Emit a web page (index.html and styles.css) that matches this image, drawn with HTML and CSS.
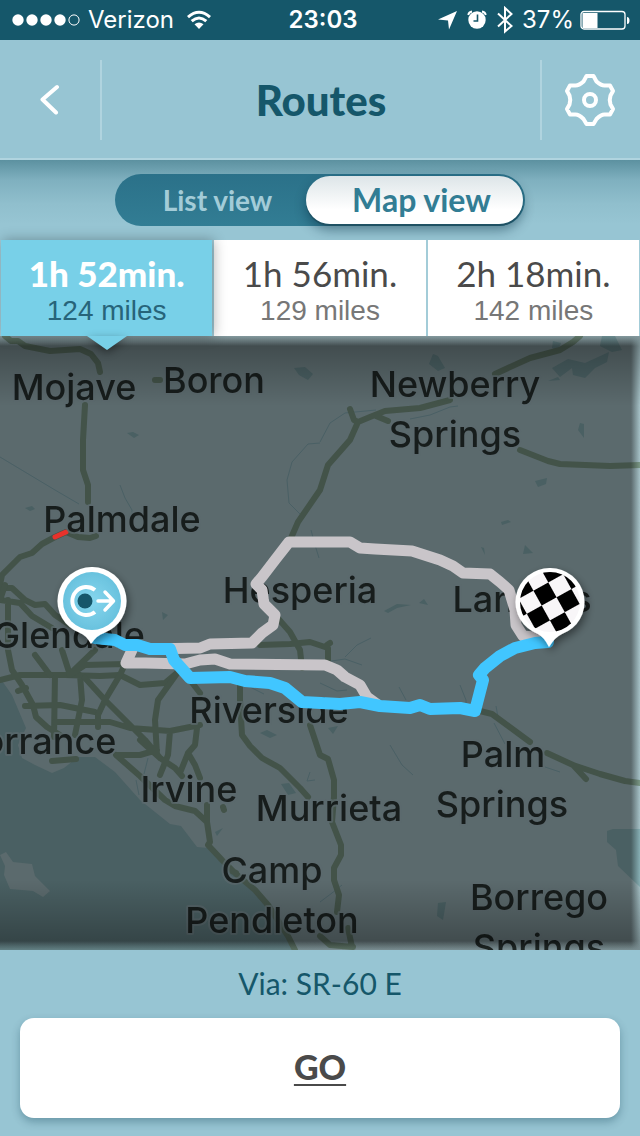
FILE: index.html
```html
<!DOCTYPE html>
<html lang="en">
<head>
<meta charset="utf-8">
<meta name="viewport" content="width=device-width, initial-scale=1">
<title>Routes</title>
<link rel="stylesheet" href="styles.css">
</head>
<body>
<div class="status">
  <div class="status-side">
    <svg class="signal" width="68" height="12" viewBox="0 0 68 12" aria-hidden="true"><g fill="#fff"><circle cx="6" cy="6" r="5.7"/><circle cx="20" cy="6" r="5.7"/><circle cx="34" cy="6" r="5.7"/><circle cx="48" cy="6" r="5.7"/></g><circle cx="62" cy="6" r="5.1" fill="none" stroke="#fff" stroke-width="1"/></svg>
    <span>Verizon</span>
    <svg class="wifi" width="26" height="20" viewBox="0 0 26 20" aria-hidden="true"><g fill="none" stroke="#fff" stroke-width="3"><path d="M2 7.2Q13-2.600 24 7.200"/><path d="M5.700 11.200Q13 4.800 20.300 11.200"/></g><path d="M8.500 14.200Q13 10.700 17.500 14.200L13 19Z" fill="#fff"/></svg>
  </div>
  <span class="clock">23:03</span>
  <div class="status-side status-end">
    <svg width="20" height="20" viewBox="0 0 20 20" aria-hidden="true"><path d="M19 1L11 19.500 10 10.500 0 9.500Z" fill="#fff"/></svg>
    <svg width="22" height="20" viewBox="0 0 22 20" aria-hidden="true"><circle cx="11" cy="10" r="8.700" fill="#fff"/><path d="M2.200 5Q2.800 2 6 1.500M19.800 5Q19.200 2 16 1.500" fill="none" stroke="#fff" stroke-width="1.800"/><path d="M11.500 4.500V11H7.500" fill="none" stroke="#15576a" stroke-width="1.600"/></svg>
    <svg width="18" height="28" viewBox="0 0 18 28" aria-hidden="true"><path d="M2 7.500L15.500 20 9 25.500V2L15.500 8 2 20.500" fill="none" stroke="#fff" stroke-width="2"/></svg>
    <span class="battery">37%
    <svg width="50" height="20" viewBox="0 0 50 20" aria-hidden="true"><rect x="1" y="1.500" width="44" height="17.500" rx="3" fill="none" stroke="#fff" stroke-width="1.300"/><path d="M2.500 3H17.500V18H2.500ZM47 7Q49.500 7 49.500 10.500T47 14Z" fill="#fff"/></svg></span>
  </div>
</div>

<header class="header">
  <button class="nav-btn nav-back" aria-label="Back">
    <svg width="20" height="32" viewBox="0 0 20 32" aria-hidden="true"><path d="M17 3L2.500 15.500 16 28.500" fill="none" stroke="#fff" stroke-width="4" stroke-linecap="round" stroke-linejoin="round"/></svg>
  </button>
  <h1 class="title">Routes</h1>
  <button class="nav-btn nav-settings" aria-label="Settings">
    <svg width="52" height="54" viewBox="0 0 52 54" aria-hidden="true"><g fill="none" stroke="#fff" stroke-width="4" stroke-linejoin="round"><path d="M22.500 3H29.500L32.500 8.500Q37 12.500 40.500 12.500H46L49 18 46.500 22.500Q45 27 46.500 31.500L49 36 46 41.500H40.500Q37 41.500 32.500 46L29.500 51H22.500L19.500 46Q15 41.500 11.500 41.500H6L3 36 5.500 31.500Q7 27 5.500 22.500L3 18 6 12.500H11.500Q15 12.500 19.500 8.500Z"/><circle cx="26" cy="27" r="6"/></g></svg>
  </button>
</header>

<main class="content">
  <div class="switch-bar">
    <div class="switch">
      <button class="switch-item">List view</button>
      <button class="switch-item switch-on" aria-pressed="true">Map view</button>
    </div>
  </div>

  <div class="options">
    <button class="option option-on" aria-pressed="true"><span class="time">1h 52min.</span><span class="distance">124 miles</span></button>
    <button class="option"><span class="time">1h 56min.</span><span class="distance">129 miles</span></button>
    <button class="option"><span class="time">2h 18min.</span><span class="distance">142 miles</span></button>
  </div>

  <section class="map" aria-label="Route map">
    <svg class="map-art" viewBox="0 336 640 614" preserveAspectRatio="xMidYMid slice">
      <defs>
        <radialGradient id="startFill"><stop offset="0" stop-color="#86d6ee"/><stop offset="1" stop-color="#69c2de"/></radialGradient>
        <pattern id="checks" width="34" height="34" patternUnits="userSpaceOnUse" patternTransform="translate(545 594) rotate(-29) translate(-8.500 -8.500)"><rect width="34" height="34" fill="#f8f6f8"/><path d="M0 0H17V34H34V17H0Z"/></pattern>
        <filter id="pinShadow" x="-50%" y="-50%" width="200%" height="200%"><feDropShadow dx="2" dy="4" stdDeviation="4" flood-color="#000" flood-opacity=".45"/></filter>
      </defs>
      <rect x="0" y="336" width="640" height="614" fill="#5b6a6d"/>

      <g class="water">
        <path d="M0 678L12 695 26 728 18 745 22 758 35 765 52 773 64 768 78 757 95 757 115 772 140 800 170 824 181 826 197 847 208 848 225 865 250 888 268 904 282 925 296 950H0Z"/>
        <path d="M607 831L613 829H640V887L618 866 616 850 607 842Z"/>
        <path d="M602 336H615L622 350 612 352 600 346ZM552 368L568 359 585 363 609 352 607 362 595 368 585 378 573 375 572 368 560 377ZM548 381L558 377 560 380ZM553 341L561 343 558 351 552 348ZM433 354L438 356 445 368 438 371 429 364ZM294 368L305 367 313 374 308 380 299 375ZM127 433L133 432 139 435 134 438ZM580 423L584 424V438L578 430ZM535 481L547 478 546 484 538 487ZM25 508L32 506 35 509 30 511ZM501 522L508 520 511 522 502 525ZM525 545L533 553 523 554ZM481 547L485 555 484 548ZM384 611L397 604 411 605 397 608 388 613ZM419 603L424 599 428 605ZM162 612L168 615 163 620ZM260 733L267 730 277 735 270 738ZM328 728L338 726 333 734ZM281 784L289 783 296 793 288 795ZM215 832L223 828 217 836ZM438 903L446 902 443 920 437 916Z"/>
      </g>
      <path d="M0 855L6 852 13 862 32 864 35 876 50 891 43 897 33 891 10 889 4 875 5 866Z" fill="#5b6a6d"/>

      <g class="streams">
        <path d="M0 457L30 475 55 490 79 504M120 485L125 498 132 510V518M320 443L308 444 292 462 287 480 289 503 301 515M311 530L315 545 319 558M320 442L330 423 345 413 376 410M410 419L430 415 450 407 458 406M320 683L337 691 347 690M399 687L406 700M460 685L466 700V708M496 706L498 717M494 723L505 744M390 745L402 765 413 775M545 767L560 772M148 758L144 774M310 772L307 781 315 780M320 902L332 893 342 885M325 662L345 659 362 665M345 657L357 645 371 638M244 684L264 694M136 780L139 795"/>
      </g>

      <g class="roads">
        <path d="M5 336L11 341 18 341 25 346 50 351 80 349 91 354 98 363 100 372M85 405L83 440 83 470 88 485V502M96 536L90 538 78 537 66 532 55 537 42 544 32 553 20 557 2 575 0 585M155 380H160"/>
        <path d="M350 409L354 420 358 422 350 440 328 465 320 490 298 522 288 545M358 422L370 417 385 411 420 408 450 400M376 416L388 421M495 374L530 358 560 350 573 342 580 336M520 450L548 461 560 464 610 466 640 465"/>
        <path d="M480 711L492 714 530 742M547 753L573 765 600 774 625 781 640 783M573 765L586 779M275 615L290 632 300 650 302 668M260 645L290 644 310 642 328 648V660M327 645L330 643"/>
        <path d="M240 680V700L242 735 250 746 262 758 280 768 300 788 308 797M310 725L320 755 328 759 334 780V797L332 822 341 845V855L334 868V880L339 895 337 912M348 928L352 947M320 936L330 945 353 947"/>
        <path d="M116 755L140 776 165 800 175 806 195 811 207 822 210 842 208 845 222 860 235 873 255 890 268 905 288 936 295 950M207 805V822M223 807L224 810M232 871L236 873"/>
        <path d="M0 588H12L25 600 35 605 45 604 55 615 70 625M0 600L20 603 32 616 52 628M8 600V650L12 670 22 685 33 705 36 717 47 727 60 735M0 680L20 675 65 675 100 676 120 675 140 685 165 683 178 672M18 691L26 688M25 706L60 705 95 712M55 675L54 737M80 675L82 700 75 735"/>
        <path d="M55 722L110 722 130 728 170 731 200 725M85 678L105 700 125 720 145 740 160 758M62 650L70 675 85 665 125 664 120 675 105 700 98 715V727M178 672L158 700 155 720 157 755M170 731L168 755 160 775M197 728L195 745 188 753 180 773M188 753L195 765 200 778M117 755L140 755 157 750M140 740L160 758 175 768 182 776M52 761L76 759M35 655L50 675M95 650L70 674M190 680L200 693M0 600L5 585"/>
      </g>
      <path d="M55 537L66 532" class="traffic"/>

      <g class="labels">
        <text x="74" y="400">Mojave</text>
        <text x="214" y="393">Boron</text>
        <text x="455" y="397">Newberry</text>
        <text x="455" y="447">Springs</text>
        <text x="122" y="532">Palmdale</text>
        <text x="300" y="603">Hesperia</text>
        <text x="522" y="612">Landers</text>
        <text x="69" y="648">Glendale</text>
        <text x="269" y="723">Riverside</text>
        <text x="39" y="754">Torrance</text>
        <text x="189" y="802">Irvine</text>
        <text x="329" y="821">Murrieta</text>
        <text x="503" y="767">Palm</text>
        <text x="502" y="817">Springs</text>
        <text x="272" y="883">Camp</text>
        <text x="272" y="933">Pendleton</text>
        <text x="539" y="910">Borrego</text>
        <text x="539" y="960">Springs</text>
      </g>

      <g class="route">
        <path d="M150 649L200 648 210 644 252 643 262 633 273 625 275 615 264 604 262 590 256 584 262 577 275 560 289 542H350L360 548 375 549 412 551 440 560 453 566 463 573 490 574 500 582 509 590 515 610 516 625 523 636 545 638"/>
        <path d="M132 650L126 663 145 663 185 664 200 660 215 659 230 664 325 665 337 670 345 677 360 685 367 697 378 705"/>
      </g>
      <path class="route route-on" d="M95 638L115 640 125 645 137 645 150 649 170 649 174 660 190 678 230 677 245 681 270 683 285 688 302 702 340 704 360 702 380 706 410 708 420 705 430 709 460 708 475 711 483 680 479 675 485 668 500 656 515 648 535 643 548 642"/>

      <g filter="url(#pinShadow)">
        <path d="M92 567A34 34 0 0 1 104 633Q97 635 91 644 86 635 80 633A34 34 0 0 1 92 567Z" fill="#fff"/>
        <circle cx="92" cy="601" r="29" fill="url(#startFill)"/>
        <path d="M95 590A14 14 0 1 0 95 612" fill="none" stroke="#fff" stroke-width="4"/>
        <circle cx="85" cy="601" r="7.500" fill="#15576a"/>
        <path d="M98 601H113M105 592L113.500 601 105 610" fill="none" stroke="#fff" stroke-width="3.500" stroke-linecap="round" stroke-linejoin="round"/>
      </g>
      <g filter="url(#pinShadow)">
        <path d="M550 568A34 34 0 0 1 562 634Q555 637 549 647 544 637 538 634A34 34 0 0 1 550 568Z" fill="#fff"/>
        <circle cx="550" cy="602" r="30" fill="url(#checks)"/>
      </g>
    </svg>
  </section>
</main>

<footer class="footer">
  <p class="via">Via: SR-60 E</p>
  <button class="go">GO</button>
</footer>
</body>
</html>
```
FILE: styles.css
```css
* { box-sizing: border-box; }

body {
  margin: 0;
  min-height: 100vh;
  display: flex;
  flex-direction: column;
  background: #97c5d3;
  color: #15576a;
  font-family: Lato, "Open Sans", sans-serif;
}

button {
  margin: 0;
  padding: 0;
  border: 0;
  background: none;
  color: inherit;
  font: inherit;
  cursor: pointer;
}

.status {
  display: grid;
  grid-template-columns: 1fr auto 1fr;
  align-items: center;
  height: 40px;
  padding: 0 10px 0 12px;
  background: #15576a;
  color: #fff;
  font: 24px/40px Inter, sans-serif;
}
.status-side { display: flex; align-items: center; gap: 8px; }
.status-side svg { flex: none; }
.status .wifi { margin-left: 4px; }
.status-end { justify-content: flex-end; }
.battery { display: flex; align-items: center; gap: 6px; }
.clock { padding-left: 4px; font-weight: 600; }

.header {
  display: grid;
  grid-template-columns: 102px 1fr 100px;
  align-items: center;
  height: 120px;
  padding-top: 2px;
  border-bottom: 2px solid #b0d4df;
}
.nav-btn {
  display: flex;
  align-items: center;
  justify-content: center;
  height: 80px;
}
.nav-back { border-right: 2px solid #b0d4df; }
.nav-settings { padding-right: 2px; border-left: 2px solid #b0d4df; }
.title {
  margin: 0;
  text-align: center;
  font-size: 42px;
  line-height: 48px;
  font-weight: 900;
}

.content { flex: 1; display: flex; flex-direction: column; }

.switch-bar {
  display: flex;
  justify-content: center;
  padding: 14px 16px;
  background: linear-gradient(#5c91a0, #7fb0bf 20px, #90bfcd 44px, #97c5d3 64px);
}
.switch {
  display: grid;
  grid-template-columns: 191fr 217fr;
  width: 100%;
  max-width: 410px;
  height: 52px;
  padding: 2px 2px 2px 0;
  border-radius: 26px;
  background: linear-gradient(#2b7189, #327d94);
}
.switch-item {
  padding-left: 14px;
  color: #a3ccd8;
  font-size: 28px;
  line-height: 48px;
  font-weight: 700;
}
.switch-on {
  border-radius: 24px;
  background: linear-gradient(#dde5e8, #fff 70%);
  color: #327d94;
  font-size: 32px;
  box-shadow: 0 2px 0 #1f5163, 0 6px 12px rgba(0, 40, 60, .45);
}

.options {
  display: grid;
  grid-template-columns: repeat(3, 1fr);
  gap: 2px;
  padding: 0 1px;
  background: #a3ccd8;
}
.option {
  display: flex;
  flex-direction: column;
  align-items: center;
  height: 96px;
  padding: 13px 0 11px;
  background: #fff;
  color: #4a4a4a;
}
.time { font-size: 35px; line-height: 40px; }
.distance {
  color: #777;
  font-family: "Liberation Sans", Arial, sans-serif;
  font-size: 28px;
  line-height: 36px;
}
.option-on {
  position: relative;
  z-index: 1;
  background: #78d0e8;
  color: #fff;
  box-shadow: 2px 0 12px rgba(0, 0, 0, .3);
}
.option-on .time { font-weight: 900; }
.option-on .distance { color: #27647a; }
.option-on::after {
  content: "";
  position: absolute;
  top: 100%;
  left: 50%;
  margin-left: -20px;
  border: 20px solid transparent;
  border-top: 14px solid #78d0e8;
  border-bottom: 0;
  filter: drop-shadow(0 3px 4px rgba(0, 0, 0, .4));
}

.map {
  position: relative;
  isolation: isolate;
  flex: 1;
  display: flex;
  min-height: 320px;
  overflow: hidden;
}
.map-art { flex: 1; min-width: 0; width: 100%; }
.map::before,
.map::after {
  content: "";
  position: absolute;
  inset: 0;
  pointer-events: none;
}
.map::before {
  mix-blend-mode: color-dodge;
  background:
    linear-gradient(rgba(135, 135, 135, 1), rgba(135, 135, 135, 0) 10px),
    linear-gradient(to top, rgba(125, 125, 125, 1), rgba(125, 125, 125, 0) 9px),
    linear-gradient(to left, rgba(115, 115, 115, 1), rgba(115, 115, 115, 0) 9px);
}
.map::after {
  background:
    linear-gradient(rgba(0, 0, 0, .32), rgba(0, 0, 0, 0) 70px),
    linear-gradient(to top, rgba(0, 0, 0, .32), rgba(0, 0, 0, 0) 70px);
}

.water { fill: #4a6063; }
.streams { fill: none; stroke: #4a6065; stroke-width: 1; }
.roads {
  fill: none;
  stroke: #435349;
  stroke-width: 6;
  stroke-linecap: round;
  stroke-linejoin: round;
}
.traffic { stroke: #e8322c; stroke-width: 5; stroke-linecap: round; }
.labels {
  fill: #171d1c;
  stroke: #5b6a6d;
  stroke-width: 4;
  stroke-opacity: .7;
  stroke-linejoin: round;
  paint-order: stroke;
  font: 500 36px Inter, sans-serif;
  text-anchor: middle;
}
.route {
  fill: none;
  stroke: #c9c5c9;
  stroke-width: 11;
  stroke-linecap: round;
  stroke-linejoin: round;
}
.route-on { stroke: #41c6ff; stroke-width: 12; }

.footer { padding: 13px 20px 18px; }
.via {
  margin: 0 0 15px;
  text-align: center;
  font-size: 30px;
  line-height: 40px;
}
.go {
  display: block;
  width: 100%;
  height: 100px;
  padding-bottom: 4px;
  border-radius: 14px;
  background: #fff;
  color: #4a4a4a;
  font-size: 34px;
  font-weight: 900;
  text-decoration: underline;
  text-decoration-thickness: 2px;
  text-underline-offset: 4px;
  text-decoration-skip-ink: none;
  box-shadow: 0 4px 8px rgba(0, 50, 70, .3);
}
```
